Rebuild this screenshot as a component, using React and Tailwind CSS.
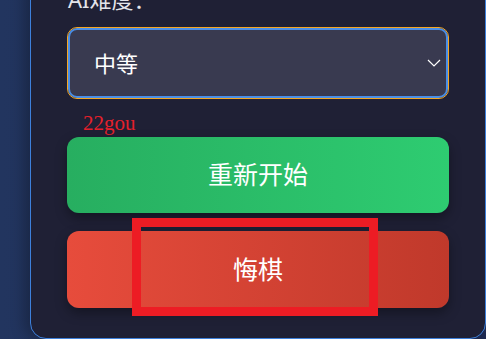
import React from 'react';

const cjk = { fontFamily: '"Noto Sans", "Noto Sans CJK SC", sans-serif' };

function App() {
  return (
    <div
      className="relative w-[486px] h-[339px] overflow-hidden flex items-end bg-gradient-to-r from-[#22355f] to-[#1f2b52]"
      style={cjk}
    >
      {/* Settings panel */}
      <div className="ml-[30px] w-[456px] shrink-0 flex flex-col bg-[#1f2035] border border-[#3d80db] rounded-[16px] px-[36px] pb-[30px] pt-[20px] shadow-[-6px_0_14px_rgba(0,0,0,0.25)]">
        <div className="text-[22px] leading-[32px] text-[#e4e4ea] pl-px mb-[13px]">AI难度：</div>

        {/* select */}
        <div className="h-[70px] flex items-center justify-between rounded-[9px] border-2 border-[#4a8ee6] bg-[#393a50] outline outline-1 outline-[#f5a623] mx-px pl-[24px] pr-[6px]">
          <span className="text-[22px] text-white">中等</span>
          <svg width="14" height="8" viewBox="0 0 14 8" fill="none" className="mr-[-1px]">
            <polyline points="1,1 7,7 13,1" stroke="#ffffff" strokeWidth="1.2" />
          </svg>
        </div>

        <div className="h-[39px] pl-[16px] pt-[14px]">
          <span
            className="text-[21px] leading-[20px] text-[#e5202b]"
            style={{ fontFamily: '"Liberation Serif", serif' }}
          >
            22gou
          </span>
        </div>

        <button className="h-[76px] rounded-[12px] bg-gradient-to-r from-[#27ae60] to-[#2ecc71] text-white text-[25px] shadow-[0_5px_12px_rgba(0,0,0,0.35)]">
          重新开始
        </button>
        <button className="mt-[18px] h-[77px] rounded-[12px] bg-gradient-to-r from-[#e74c3c] to-[#c0392b] text-white text-[25px] shadow-[0_5px_12px_rgba(0,0,0,0.35)]">
          悔棋
        </button>
      </div>

      {/* highlight frame */}
      <div className="absolute left-[132px] top-[218px] w-[246px] h-[98px] border-[9px] border-[#ed1c24]" />
    </div>
  );
}

export default App;
